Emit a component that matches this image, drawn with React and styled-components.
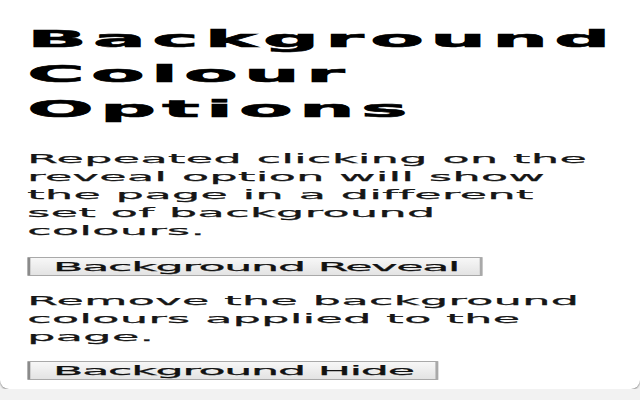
import React from 'react';
import styled, { createGlobalStyle } from 'styled-components';

const STRETCH = 3.4;

const GlobalStyle = createGlobalStyle`
  html, body {
    margin: 0;
    padding: 0;
    background: #f2f2f2;
  }
  body {
    font-family: "DejaVu Sans", Verdana, sans-serif;
    overflow: hidden;
  }
`;

// Popup card, the content inside is drawn in a narrow column and widened
const Card = styled.div`
  width: 640px;
  height: 389px;
  background: #fff;
  border-radius: 0 0 9px 9px;
  box-shadow: 0 1px 2px rgba(0, 0, 0, 0.45);
  overflow: hidden;
`;

const Stretch = styled.div`
  width: ${640 / STRETCH}px;
  transform: scaleX(${STRETCH});
  transform-origin: 0 0;
  padding: 22px 0 0 8px;
  box-sizing: border-box;
`;

const Title = styled.h1`
  margin: 0 0 23px;
  font-size: 23px;
  line-height: 35px;
  font-weight: bold;
  letter-spacing: 1.85px;
  color: #000;
  -webkit-text-stroke: 0.6px #000;
  white-space: nowrap;
`;

const Text = styled.p`
  margin: 0;
  font-size: 13px;
  line-height: 18px;
  letter-spacing: 0.15px;
  color: #161616;
  -webkit-text-stroke: 0.25px #161616;
  white-space: nowrap;
`;

const Button = styled.button`
  display: block;
  margin: ${p => p.$top}px 0 ${p => p.$bottom}px 0;
  height: 19px;
  padding: 0 6px 0 6.6px;
  font-family: "DejaVu Sans", Verdana, sans-serif;
  font-size: 13px;
  line-height: 15px;
  letter-spacing: -0.35px;
  color: #111;
  -webkit-text-stroke: 0.25px #111;
  background: linear-gradient(#f7f7f7, #e3e3e3);
  border: 1px solid #a9a9a9;
  border-left-color: #8a8a8a;
  border-radius: 1px;
  white-space: nowrap;
`;

export default function App() {
  return (
    <>
      <GlobalStyle />
      <Card>
        <Stretch>
          <Title>
            Background<br />Colour<br />Options
          </Title>
          <Text>
            Repeated clicking on the<br />
            reveal option will show<br />
            the page in a different<br />
            set of background<br />
            colours.
          </Text>
          <Button $top={17} $bottom={16}>Background Reveal</Button>
          <Text>
            Remove the background<br />
            colours applied to the<br />
            page.
          </Text>
          <Button $top={15} $bottom={0}>Background Hide</Button>
        </Stretch>
      </Card>
    </>
  );
}
